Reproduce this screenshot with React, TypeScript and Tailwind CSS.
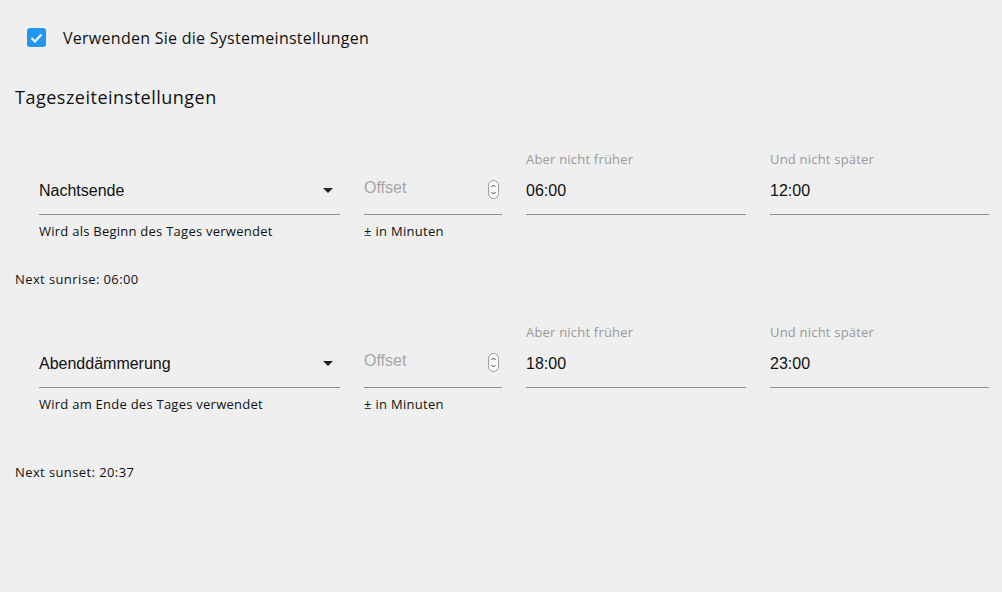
import React from "react";

const uiFont = { fontFamily: '"Open Sans", "DejaVu Sans", sans-serif' };
const inFont = { fontFamily: '"Liberation Sans", Arial, sans-serif' };

function Spin() {
  return (
    <svg width="11" height="19" viewBox="0 0 11 19" className="shrink-0">
      <rect x="0.5" y="0.5" width="10" height="18" rx="5" fill="#fafafa" stroke="#9a9a9a" />
      <path d="M3.5 7 L5.5 5 L7.5 7" fill="none" stroke="#444" strokeWidth="1" />
      <path d="M3.5 12 L5.5 14 L7.5 12" fill="none" stroke="#444" strokeWidth="1" />
    </svg>
  );
}

function Row({ select, helper, from, to }: { select: string; helper: string; from: string; to: string }) {
  return (
    <div className="flex pl-[24px] pr-[13px] gap-[24px]">
      <div className="w-[301px] flex flex-col">
        <div className="h-[16px]" />
        <div className="h-[47px] flex items-center justify-between border-b border-[#8e8e8e] box-content">
          <span className="text-[16px] text-[#111]" style={inFont}>{select}</span>
          <svg width="10" height="5" viewBox="0 0 10 5" className="mr-[7px]">
            <path d="M0 0 L10 0 L5 5 Z" fill="#222" />
          </svg>
        </div>
        <div className="mt-[8px] h-[16px] leading-[16px] text-[13px] tracking-[0.25px] text-[#111]" style={uiFont}>{helper}</div>
      </div>
      <div className="w-[138px] flex flex-col">
        <div className="h-[16px]" />
        <div className="h-[47px] flex items-center justify-between border-b border-[#8e8e8e] box-content">
          <span className="text-[16px] text-[#a5a5a5] -mt-[5px]" style={inFont}>Offset</span>
          <div className="mr-[3px] -mt-[3px] flex"><Spin /></div>
        </div>
        <div className="mt-[8px] h-[16px] leading-[16px] text-[13px] tracking-[0.3px] text-[#111]" style={uiFont}>± in Minuten</div>
      </div>
      <div className="w-[220px] flex flex-col">
        <div className="h-[16px] leading-[16px] text-[13px] tracking-[0.2px] text-[#9a9a9a]" style={uiFont}>Aber nicht früher</div>
        <div className="h-[47px] flex items-center border-b border-[#8e8e8e] box-content">
          <span className="text-[16px] text-[#111]" style={inFont}>{from}</span>
        </div>
      </div>
      <div className="flex-1 flex flex-col">
        <div className="h-[16px] leading-[16px] text-[13px] tracking-[0.2px] text-[#9a9a9a]" style={uiFont}>Und nicht später</div>
        <div className="h-[47px] flex items-center border-b border-[#8e8e8e] box-content">
          <span className="text-[16px] text-[#111]" style={inFont}>{to}</span>
        </div>
      </div>
    </div>
  );
}

export default function App() {
  return (
    <div className="w-[1002px] h-[592px] bg-[#efefef] pl-[15px] overflow-hidden text-[#111]" style={uiFont}>
      <div className="flex items-center pt-[28px] pl-[12px] gap-[17px] h-[48px]">
        <div className="w-[19px] h-[19px] -mt-[1px] rounded-[3px] bg-[#2196f3] flex items-center justify-center">
          <svg width="13" height="10" viewBox="0 0 13 10">
            <path d="M1.5 5 L5 8.5 L11.5 1.5" fill="none" stroke="#fff" strokeWidth="2" />
          </svg>
        </div>
        <span className="text-[16px] leading-[20px] tracking-[0.27px]">Verwenden Sie die Systemeinstellungen</span>
      </div>
      <div className="mt-[37px] text-[18px] leading-[24px] tracking-[0.5px]">Tageszeiteinstellungen</div>
      <div className="mt-[42px]">
        <Row select="Nachtsende" helper="Wird als Beginn des Tages verwendet" from="06:00" to="12:00" />
      </div>
      <div className="mt-[32px] text-[13px] leading-[16px] tracking-[0.4px]">Next sunrise: 06:00</div>
      <div className="mt-[37px]">
        <Row select="Abenddämmerung" helper="Wird am Ende des Tages verwendet" from="18:00" to="23:00" />
      </div>
      <div className="mt-[52px] text-[13px] leading-[16px] tracking-[0.4px]">Next sunset: 20:37</div>
    </div>
  );
}
